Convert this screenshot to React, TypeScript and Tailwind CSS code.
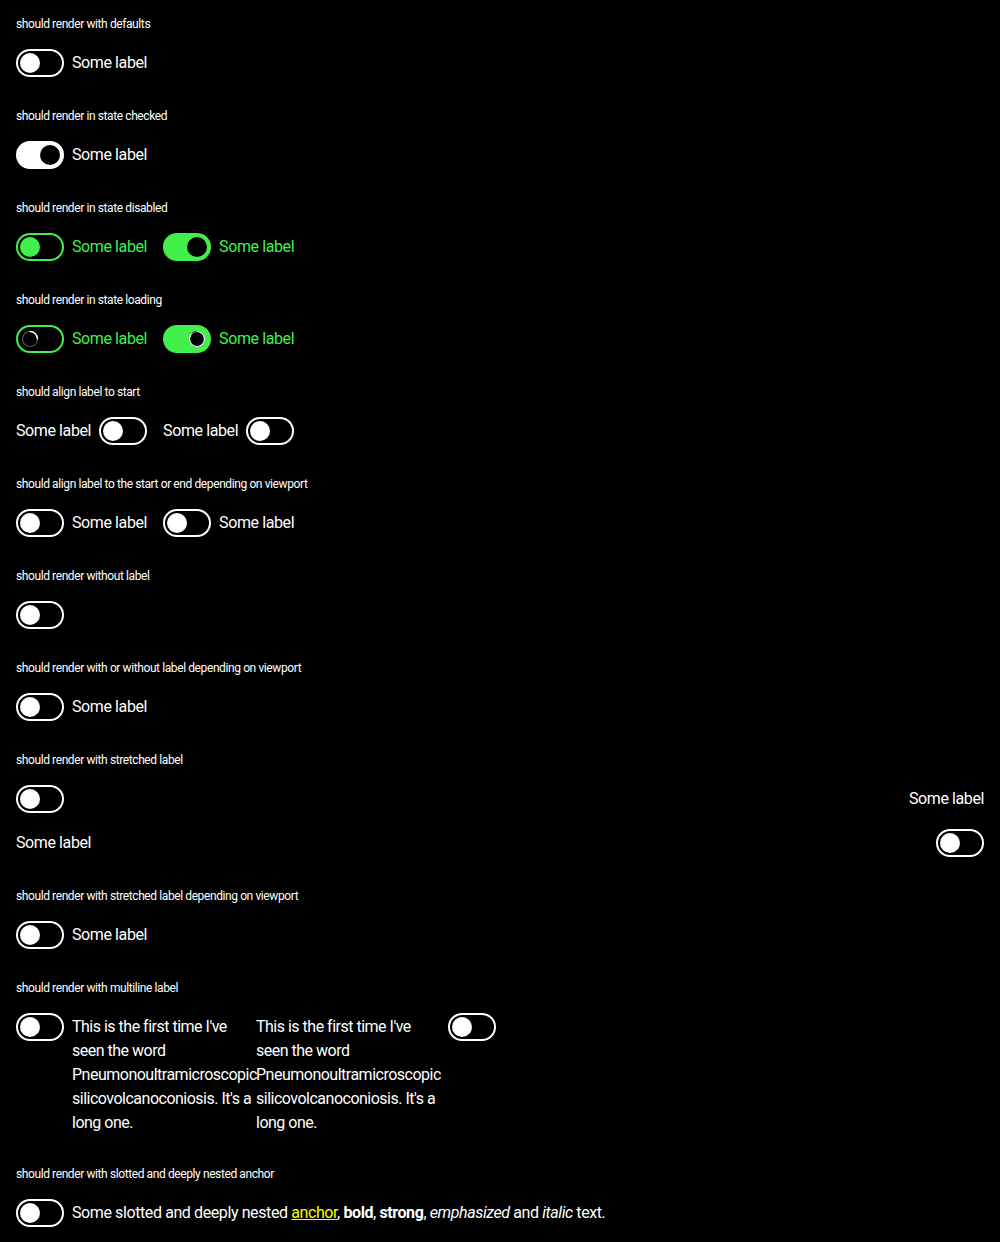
import React from 'react';

type Tone = 'white' | 'green';

interface SwitchProps {
  checked?: boolean;
  tone?: Tone;
  loading?: boolean;
}

const Spinner = ({ checked }: { checked: boolean }) => (
  <svg width="20" height="20" viewBox="0 0 20 20" className="block">
    {checked && <circle cx="10" cy="10" r="8" fill="#000" />}
    <circle cx="10" cy="10" r="7.5" fill="none" stroke={checked ? '#fff' : '#555'} strokeWidth="1.2" />
    {checked ? (
      <path d="M10 2.5 A7.5 7.5 0 0 0 4.7 4.7" fill="none" stroke="#555" strokeWidth="1.4" />
    ) : (
      <path d="M10 2.5 A7.5 7.5 0 0 1 17.5 10" fill="none" stroke="#fff" strokeWidth="1.4" strokeLinecap="round" />
    )}
  </svg>
);

const Switch = ({ checked = false, tone = 'white', loading = false }: SwitchProps) => {
  const border = tone === 'green' ? 'border-[#41f04a]' : 'border-white';
  const track = checked ? (tone === 'green' ? 'bg-[#41f04a]' : 'bg-white') : 'bg-black';
  const knob = checked ? 'bg-black' : tone === 'green' ? 'bg-[#41f04a]' : 'bg-white';
  return (
    <span
      className={`flex shrink-0 w-12 h-7 rounded-full border-2 ${border} ${track} items-center px-[2px] ${
        checked ? 'justify-end' : 'justify-start'
      }`}
    >
      {loading ? (
        <Spinner checked={checked} />
      ) : (
        <span className={`block w-5 h-5 rounded-full ${knob}`} />
      )}
    </span>
  );
};

interface ItemProps extends SwitchProps {
  label?: React.ReactNode;
  start?: boolean;
  className?: string;
}

const Item = ({ label, start, className = '', ...rest }: ItemProps) => {
  const color = rest.tone === 'green' ? 'text-[#41f04a]' : 'text-white';
  const text = label ? <span className={`${color} text-base leading-6 tracking-[-0.4px]`}>{label}</span> : null;
  return (
    <div className={`flex items-center gap-2 ${className}`}>
      {start && text}
      <Switch {...rest} />
      {!start && text}
    </div>
  );
};

const Section = ({ title, children }: { title: string; children: React.ReactNode }) => (
  <section className="flex flex-col gap-4">
    <h2 className="text-xs leading-[18px] text-white font-normal tracking-[-0.4px]">{title}</h2>
    {children}
  </section>
);

const L = 'Some label';

const LongText = () => (
  <span className="text-white text-base leading-6 tracking-[-0.5px] pt-[2px] w-[186px] shrink-0 break-words">
    This is the first time I've seen the word Pneumonoultramicroscopic<wbr />silicovolcanoconiosis. It's a long
    one.
  </span>
);

export default function App() {
  return (
    <div
      className="min-h-[1242px] bg-black px-4 pt-[15px] pb-4 flex flex-col gap-[30px]"
      style={{ fontFamily: 'Roboto, "Noto Sans", sans-serif' }}
    >
      <Section title="should render with defaults">
        <Item label={L} />
      </Section>
      <Section title="should render in state checked">
        <Item label={L} checked />
      </Section>
      <Section title="should render in state disabled">
        <div className="flex gap-4">
          <Item label={L} tone="green" />
          <Item label={L} tone="green" checked />
        </div>
      </Section>
      <Section title="should render in state loading">
        <div className="flex gap-4">
          <Item label={L} tone="green" loading />
          <Item label={L} tone="green" checked loading />
        </div>
      </Section>
      <Section title="should align label to start">
        <div className="flex gap-4">
          <Item label={L} start />
          <Item label={L} start />
        </div>
      </Section>
      <Section title="should align label to the start or end depending on viewport">
        <div className="flex gap-4">
          <Item label={L} />
          <Item label={L} />
        </div>
      </Section>
      <Section title="should render without label">
        <Item />
      </Section>
      <Section title="should render with or without label depending on viewport">
        <Item label={L} />
      </Section>
      <Section title="should render with stretched label">
        <div className="flex flex-col gap-4">
          <div className="flex items-center justify-between">
            <Switch />
            <span className="text-white text-base leading-6 tracking-[-0.4px]">{L}</span>
          </div>
          <div className="flex items-center justify-between">
            <span className="text-white text-base leading-6 tracking-[-0.4px]">{L}</span>
            <Switch />
          </div>
        </div>
      </Section>
      <Section title="should render with stretched label depending on viewport">
        <Item label={L} />
      </Section>
      <Section title="should render with multiline label">
        <div className="flex">
          <div className="flex items-start gap-2 w-[240px]">
            <Switch />
            <LongText />
          </div>
          <div className="flex items-start gap-[6px] w-[240px]">
            <LongText />
            <Switch />
          </div>
        </div>
      </Section>
      <Section title="should render with slotted and deeply nested anchor">
        <Item
          label={
            <>
              Some slotted and deeply nested{' '}
              <a href="#" className="text-[#ffff00] underline">
                anchor
              </a>
              , <b className="font-bold">bold</b>, <strong className="font-bold">strong</strong>,{' '}
              <em>emphasized</em> and <i>italic</i> text.
            </>
          }
        />
      </Section>
    </div>
  );
}
